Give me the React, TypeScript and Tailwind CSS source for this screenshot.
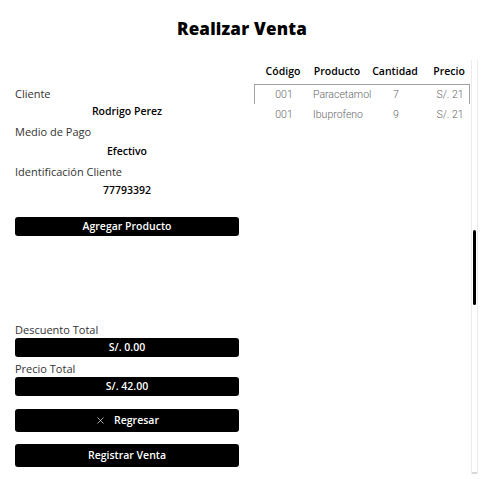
import { X } from "lucide-react";

const font = { fontFamily: '"Open Sans", "Liberation Sans", sans-serif' };

function Field({ label, value, outer, inner }: { label: string; value: string; outer: string; inner: string }) {
  return (
    <div className={outer}>
      <p className="h-[14px] text-[11px] leading-[14px] font-medium text-[#333]">{label}</p>
      <p className={`${inner} h-[14px] text-center text-[10.5px] leading-[14px] font-semibold text-black`}>
        {value}
      </p>
    </div>
  );
}

function BlackBar({ children, h, className = "" }: { children: React.ReactNode; h: string; className?: string }) {
  return (
    <div
      className={`${h} ${className} flex items-center justify-center gap-2 rounded-[3px] bg-black text-[10.5px] font-semibold text-white`}
    >
      {children}
    </div>
  );
}

const rows = [
  { code: "001", name: "Paracetamol", qty: "7", price: "S/. 21", active: true },
  { code: "001", name: "Ibuprofeno", qty: "9", price: "S/. 21", active: false },
];

export default function App() {
  return (
    <div className="relative h-[479px] w-[484px] overflow-hidden bg-white" style={font}>
      <div className="flex h-[58px] items-center justify-center">
        <h1 className="text-[17px] font-extrabold tracking-[0.2px] text-black">Realizar Venta</h1>
      </div>

      <div className="flex">
        {/* left form */}
        <div className="ml-[15px] w-[224px] pt-[29px]">
          <Field label="Cliente" value="Rodrigo Perez" outer="" inner="mt-[3px]" />
          <Field label="Medio de Pago" value="Efectivo" outer="mt-[7px]" inner="mt-[5px]" />
          <Field label="Identificación Cliente" value="77793392" outer="mt-[7px]" inner="mt-[4px]" />

          <BlackBar h="h-[19px]" className="mt-[20px]">
            Agregar Producto
          </BlackBar>

          <p className="mt-[87px] h-[14px] text-[11px] leading-[14px] font-medium text-[#333]">Descuento Total</p>
          <BlackBar h="h-[19px]" className="mt-[1px]">
            S/. 0.00
          </BlackBar>
          <p className="mt-[5px] h-[14px] text-[11px] leading-[14px] font-medium text-[#333]">Precio Total</p>
          <BlackBar h="h-[19px]" className="mt-[1px]">
            S/. 42.00
          </BlackBar>

          <BlackBar h="h-[23px]" className="mt-[13px]">
            <X size={11} strokeWidth={1.4} />
            <span>Regresar</span>
          </BlackBar>
          <BlackBar h="h-[23px]" className="mt-[12px]">
            Registrar Venta
          </BlackBar>
        </div>

        {/* products table */}
        <div className="ml-[15px] w-[216px] pt-[5px]">
          <div className="grid h-[16px] grid-cols-[58px_50px_66px_42px] text-center text-[10.5px] leading-[16px] font-semibold text-black">
            <span>Código</span>
            <span>Producto</span>
            <span>Cantidad</span>
            <span>Precio</span>
          </div>
          <div className="mt-[5px]">
            {rows.map((r, i) => (
              <div
                key={i}
                className={`grid h-[20px] grid-cols-[58px_50px_66px_42px] items-center text-center text-[10.5px] font-light text-[#666] ${
                  r.active ? "border-x border-t border-[#a0a0a0]" : "border-x border-t border-transparent"
                }`}
                style={{ fontFamily: "Roboto, sans-serif" }}
              >
                <span>{r.code}</span>
                <span>{r.name}</span>
                <span>{r.qty}</span>
                <span>{r.price}</span>
              </div>
            ))}
          </div>
        </div>
      </div>

      {/* scrollbar */}
      <div className="absolute left-[471px] top-[60px] h-[414px] w-[7px] border-x border-[#ececec]">
        <div className="absolute left-[1px] top-[170px] h-[75px] w-[3px] rounded-full bg-black" />
        <div className="absolute bottom-0 left-0 h-[2px] w-full bg-[#d8d8d8]" />
      </div>
    </div>
  );
}
